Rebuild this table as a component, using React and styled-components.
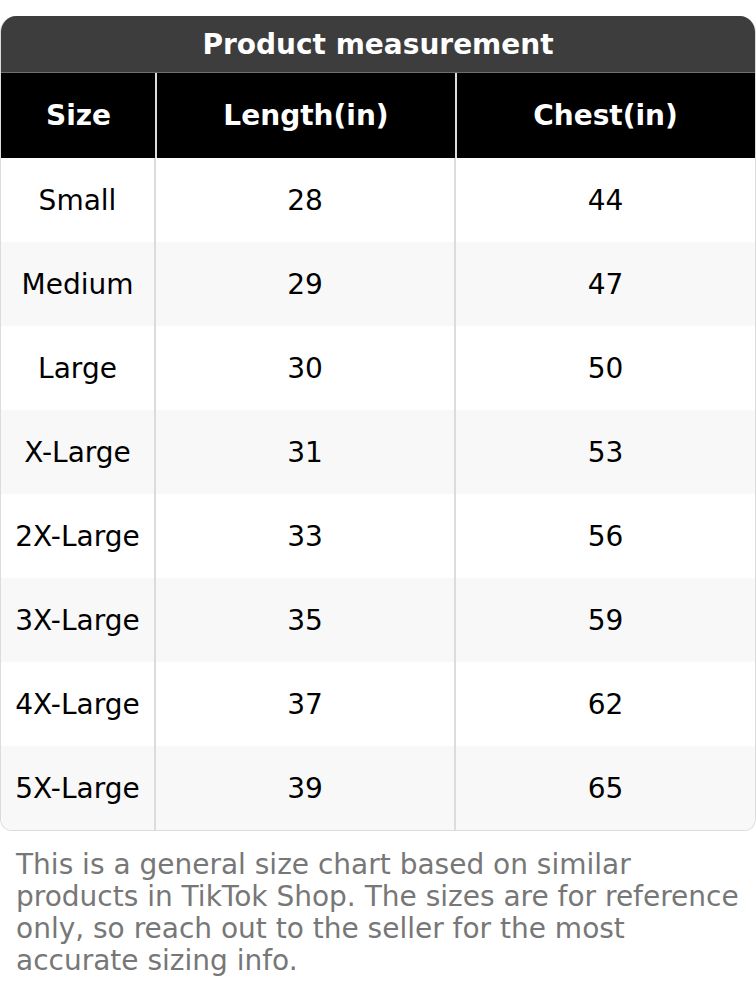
import React from "react";
import styled, { createGlobalStyle } from "styled-components";

const Global = createGlobalStyle`
  html, body { margin: 0; padding: 0; background: #fff; }
  body { font-family: "DejaVu Sans", "Noto Sans", sans-serif; }
`;

const Page = styled.div`
  padding-top: 16px;
  width: 756px;
`;

const Chart = styled.div`
  border: 1px solid #dcdcdc;
  border-top: none;
  border-radius: 16px 16px 12px 12px;
  overflow: hidden;
`;

const Title = styled.div`
  height: 56px;
  background: #3d3d3d;
  color: #fff;
  font-weight: bold;
  font-size: 28px;
  display: flex;
  align-items: center;
  justify-content: center;
  border-bottom: 1px solid #6e6e6e;
  margin: 0 -1px;
`;

const Row = styled.div`
  display: grid;
  grid-template-columns: 153px 300px 1fr;
  height: ${(p) => (p.$head ? 85 : 84)}px;
  background: ${(p) => (p.$head ? "#000" : p.$alt ? "#f8f8f8" : "#fff")};
  color: ${(p) => (p.$head ? "#fff" : "#000")};
  font-weight: ${(p) => (p.$head ? "bold" : "normal")};
  ${(p) => (p.$head ? "margin: 0 -1px; padding: 0 1px; border-left: 1px solid #6e6e6e; border-right: 1px solid #6e6e6e;" : "")}
`;

const Cell = styled.div`
  display: flex;
  align-items: center;
  justify-content: center;
  font-size: 28px;
  & + & {
    border-left: 2px solid ${(p) => (p.$head ? "#6a6a6a" : "#dcdcdc")};
  }
`;

const Note = styled.p`
  margin: 18px 0 0;
  padding: 0 16px;
  color: #777;
  font-size: 28px;
  line-height: 32px;
`;

const rows = [
  ["Small", "28", "44"],
  ["Medium", "29", "47"],
  ["Large", "30", "50"],
  ["X-Large", "31", "53"],
  ["2X-Large", "33", "56"],
  ["3X-Large", "35", "59"],
  ["4X-Large", "37", "62"],
  ["5X-Large", "39", "65"],
];

export default function App() {
  return (
    <Page>
      <Global />
      <Chart>
        <Title>Product measurement</Title>
        <Row $head>
          <Cell $head>Size</Cell>
          <Cell $head>Length(in)</Cell>
          <Cell $head>Chest(in)</Cell>
        </Row>
        {rows.map((r, i) => (
          <Row key={r[0]} $alt={i % 2 === 1}>
            {r.map((c, j) => (
              <Cell key={j}>{c}</Cell>
            ))}
          </Row>
        ))}
      </Chart>
      <Note>
        This is a general size chart based on similar products in TikTok Shop.
        The sizes are for reference only, so reach out to the seller for the
        most accurate sizing info.
      </Note>
    </Page>
  );
}
